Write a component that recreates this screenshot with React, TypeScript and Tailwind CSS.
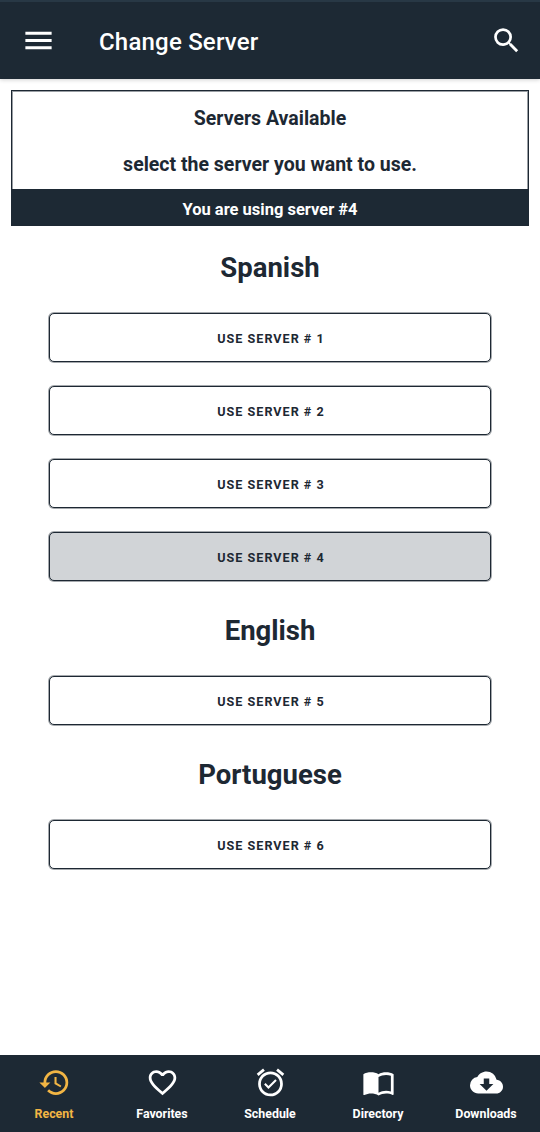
import { useState } from "react";
import {
  MdAlarmOn,
  MdCloudDownload,
  MdFavoriteBorder,
  MdHistory,
  MdImportContacts,
  MdMenu,
  MdSearch,
} from "react-icons/md";
import type { IconType } from "react-icons";

interface ServerGroup {
  language: string;
  servers: number[];
}

interface Tab {
  label: string;
  icon: IconType;
}

const groups: ServerGroup[] = [
  { language: "Spanish", servers: [1, 2, 3, 4] },
  { language: "English", servers: [5] },
  { language: "Portuguese", servers: [6] },
];

const tabs: Tab[] = [
  { label: "Recent", icon: MdHistory },
  { label: "Favorites", icon: MdFavoriteBorder },
  { label: "Schedule", icon: MdAlarmOn },
  { label: "Directory", icon: MdImportContacts },
  { label: "Downloads", icon: MdCloudDownload },
];

export default function App() {
  const [server, setServer] = useState(4);
  const [activeTab, setActiveTab] = useState("Recent");

  return (
    <div className="flex flex-col h-screen overflow-hidden bg-white text-[#1d2833] font-['Roboto',sans-serif]">
      {/* Header */}
      <header className="flex items-center h-[79px] shrink-0 pl-[21px] pr-[17px] bg-[#1d2934] text-white border-t-2 border-[#283845] shadow-[0_1px_4px_rgba(0,0,0,0.18)]">
        <button aria-label="Menu" className="mb-px">
          <MdMenu className="size-[35px]" />
        </button>
        <h1 className="ml-[43px] mt-[2px] text-[24px] leading-8 font-medium tracking-[0.2px]">Change Server</h1>
        <button aria-label="Search" className="ml-auto">
          <MdSearch className="size-[33px]" />
        </button>
      </header>

      <main className="flex-1">
        <section className="mx-[11px] mt-[11px] h-[136px] border border-[#1d2833] shadow-[inset_0_0_0_1px_rgba(29,40,51,0.45)] text-center">
          <h2 className="mt-[14px] text-[19.5px] leading-7 font-bold">Servers Available</h2>
          <p className="mt-[18px] text-[19.5px] leading-7 font-bold">select the server you want to use.</p>
          <p className="mt-[10px] h-9 bg-[#1d2934] text-white text-[16.5px] leading-[41px] font-bold">
            You are using server #{server}
          </p>
        </section>

        {groups.map((group) => (
          <section key={group.language} className="px-[49px]">
            <h3 className="h-[87px] pt-[22px] text-center text-[27.5px] leading-10 font-bold">{group.language}</h3>
            <div className="flex flex-col gap-6 mb-2">
              {group.servers.map((n) => (
                <button
                  key={n}
                  onClick={() => setServer(n)}
                  className={`h-[49px] pt-[3px] pl-[2px] rounded-[5px] border border-[#1d2833] shadow-[0_0_0_1px_rgba(29,40,51,0.4)] text-[12.6px] font-bold tracking-[1px] ${
                    n === server ? "bg-[#d1d4d7]" : "bg-white"
                  }`}
                >
                  USE SERVER # {n}
                </button>
              ))}
            </div>
          </section>
        ))}
      </main>

      {/* Bottom tabs */}
      <nav className="grid grid-cols-5 h-[77px] shrink-0 bg-[#1d2934]">
        {tabs.map(({ label, icon: Icon }) => (
          <button
            key={label}
            onClick={() => setActiveTab(label)}
            className={`flex flex-col items-center pt-[11px] ${
              label === activeTab ? "text-[#f2b544]" : "text-white"
            }`}
          >
            <Icon className="size-[33px]" />
            <span className="mt-[5px] text-[12.4px] leading-5 font-bold">{label}</span>
          </button>
        ))}
      </nav>
    </div>
  );
}
